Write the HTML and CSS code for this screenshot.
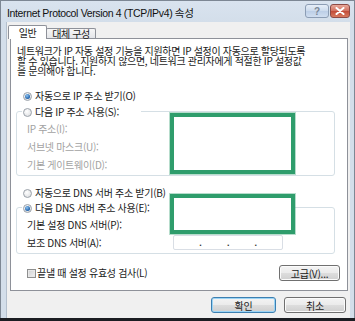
FILE: index.html
```html
<!DOCTYPE html>
<html lang="ko">
<head>
  <meta charset="UTF-8" />
  <meta name="viewport" content="width=device-width, initial-scale=1.0"/>
  <title>Internet Protocol Version 4 (TCP/IPv4) 속성</title>
  <link rel="stylesheet" href="styles.css">
</head>
<body>
  <div class="window">
    <div class="titlebar">
      <span class="title">Internet Protocol Version 4 (TCP/IPv4) 속성</span>
      <div class="caption-buttons">
        <span class="cap-btn help">?</span>
        <span class="cap-btn close">
          <svg width="10" height="8" viewBox="0 0 10 8"><path d="M1.5 1 L8.5 7 M8.5 1 L1.5 7" stroke="#fff" stroke-width="2" stroke-linecap="round"/></svg>
        </span>
      </div>
    </div>

    <div class="client">
      <div class="tabs">
        <div class="tab active">일반</div>
        <div class="tab">대체 구성</div>
      </div>

      <div class="panel">
        <p class="intro">네트워크가 IP 자동 설정 기능을 지원하면 IP 설정이 자동으로 할당되도록<br>할 수 있습니다. 지원하지 않으면, 네트워크 관리자에게 적절한 IP 설정값<br>을 문의해야 합니다.</p>

        <label class="option first"><span class="radio checked"></span>자동으로 IP 주소 받기(O)</label>

        <div class="group group-ip">
          <label class="option legend"><span class="radio"></span>다음 IP 주소 사용(S):</label>
          <div class="field disabled"><span>IP 주소(I):</span><span class="ip-box"><i></i><b>.</b><i></i><b>.</b><i></i><b>.</b><i></i></span></div>
          <div class="field disabled"><span>서브넷 마스크(U):</span><span class="ip-box"><i></i><b>.</b><i></i><b>.</b><i></i><b>.</b><i></i></span></div>
          <div class="field disabled"><span>기본 게이트웨이(D):</span><span class="ip-box"><i></i><b>.</b><i></i><b>.</b><i></i><b>.</b><i></i></span></div>
        </div>

        <label class="option dns-auto"><span class="radio"></span>자동으로 DNS 서버 주소 받기(B)</label>

        <div class="group group-dns">
          <label class="option legend"><span class="radio checked"></span>다음 DNS 서버 주소 사용(E):</label>
          <div class="field"><span>기본 설정 DNS 서버(P):</span><span class="ip-box"><i></i><b>.</b><i></i><b>.</b><i></i><b>.</b><i></i></span></div>
          <div class="field"><span>보조 DNS 서버(A):</span><span class="ip-box"><i></i><b>.</b><i></i><b>.</b><i></i><b>.</b><i></i></span></div>
        </div>

        <div class="panel-footer">
          <label class="option check-row"><span class="check"></span>끝낼 때 설정 유효성 검사(L)</label>
          <button class="btn advanced">고급(V)...</button>
        </div>

        <div class="marker marker-ip"></div>
        <div class="marker marker-dns"></div>
      </div>

      <div class="dialog-buttons">
        <button class="btn ok">확인</button>
        <button class="btn cancel">취소</button>
      </div>
    </div>
  </div>
</body>
</html>
```

FILE: styles.css
```css
:root {
  --frame: #d3deea;
  --client: #f0f0f0;
  --tab-border: #8e9199;
  --group-border: #d5dfe5;
  --disabled: #a2a2a2;
  --marker: #2f9d6c;
  --kr: "Noto Sans CJK KR", "Liberation Sans", sans-serif;
}

* {
  margin: 0;
  padding: 0;
  box-sizing: border-box;
}

body {
  width: 355px;
  height: 321px;
  overflow: hidden;
  background: #1b1d22;
  font-family: var(--kr);
  font-size: 10px;
  letter-spacing: -0.3px;
  color: #1a1a1a;
}

.window {
  height: 318px;
  background: var(--frame);
  border: 1px solid #7d8794;
  border-bottom: none;
  display: flex;
  flex-direction: column;
  padding: 0 4px 0 5px;
}

.titlebar {
  height: 21px;
  display: flex;
  align-items: center;
  justify-content: space-between;
  background: linear-gradient(#d9e3ef, #d3deea);
  margin: 0 -4px 0 -5px;
  padding: 0 4px 0 6px;
}

.title {
  font-family: "Liberation Sans", var(--kr);
  font-size: 10.5px;
  letter-spacing: -0.35px;
  color: #111;
  padding-top: 2px;
}

.caption-buttons {
  display: flex;
  gap: 1px;
  align-self: flex-start;
  margin-top: 3px;
}

.cap-btn {
  height: 14px;
  border-radius: 3px;
  display: flex;
  align-items: center;
  justify-content: center;
}

.help {
  width: 24px;
  border: 1px solid #8c9db4;
  background: linear-gradient(#e6eef8, #cbdaec 50%, #bccee6 51%, #d0def0);
  font-family: "Liberation Sans", sans-serif;
  font-size: 10px;
  font-weight: bold;
  color: #7b8796;
}

.close {
  width: 20px;
  border: 1px solid #8d4a45;
  background: linear-gradient(#e8a99b, #d1705f 50%, #c24a37 51%, #d77a5f);
}

.client {
  flex: 1;
  background: var(--client);
  border-left: 1px solid #b4c0ce;
  padding: 3px 2px 0 3px;
  display: flex;
  flex-direction: column;
}

.tabs {
  display: flex;
  align-items: flex-end;
  margin-left: -2px;
  height: 13px;
  position: relative;
  z-index: 2;
}

.tab {
  height: 10px;
  width: 50px;
  margin-left: -1px;
  border: 1px solid var(--tab-border);
  border-bottom: none;
  border-radius: 2px 2px 0 0;
  background: linear-gradient(#f6f6f6, #e4e6ea);
  display: flex;
  align-items: center;
  justify-content: center;
  line-height: 10px;
  padding-top: 1px;
  letter-spacing: -0.4px;
}

.tab.active {
  width: 39px;
  height: 14px;
  margin-left: 0;
  margin-bottom: -1px;
  background: #fff;
  position: relative;
  z-index: 1;
}

.panel {
  position: relative;
  width: 338px;
  height: 253px;
  background: #fff;
  border: 1px solid var(--tab-border);
  padding: 7px 7px 0 0;
}

.intro {
  padding-left: 6px;
  line-height: 10px;
  font-size: 10px;
  letter-spacing: -0.32px;
  white-space: nowrap;
}

.option {
  display: flex;
  align-items: center;
  height: 14px;
  line-height: 14px;
  white-space: nowrap;
}

.option.first {
  margin: 13px 0 0 12px;
}

.radio {
  width: 9px;
  height: 9px;
  border-radius: 50%;
  border: 1px solid #9aa1a9;
  background: radial-gradient(circle at 40% 35%, #ffffff, #d7d9dc);
  margin-right: 3px;
  position: relative;
  flex-shrink: 0;
}

.radio.checked::after {
  content: '';
  position: absolute;
  left: 1px;
  top: 1px;
  width: 5px;
  height: 5px;
  border-radius: 50%;
  background: radial-gradient(circle at 40% 35%, #8ec3f0, #1d5fa9 70%);
}

.group {
  margin: 0 5px 0 5px;
  border: 1px solid var(--group-border);
  border-radius: 3px;
  padding: 0 51px 2px 10px;
}

.group-ip {
  margin-top: 8px;
}

.group .legend {
  width: fit-content;
  margin: -7px 0 0 -5px;
  padding: 0 22px 0 1px;
  background: #fff;
}

.field {
  height: 18px;
  display: flex;
  align-items: center;
  justify-content: space-between;
}

.field.disabled span:first-child {
  color: var(--disabled);
}

.ip-box {
  width: 110px;
  height: 15px;
  border: 1px solid #d9dee5;
  border-radius: 2px;
  display: grid;
  grid-template-columns: 1fr auto 1fr auto 1fr auto 1fr;
  align-items: end;
  font-family: "Liberation Sans", sans-serif;
  font-size: 9px;
  line-height: 11px;
  color: #333;
}

.ip-box b {
  font-weight: bold;
}

.field.disabled .ip-box {
  background: #f4f4f4;
}

.option.dns-auto {
  margin: 10px 0 0 12px;
}

.group-dns {
  margin-top: 7px;
}

.panel-footer {
  margin: 11px 0 0 16px;
  display: flex;
  align-items: center;
  justify-content: space-between;
}

.check {
  width: 9px;
  height: 9px;
  border: 1px solid #8e8f8f;
  background: linear-gradient(135deg, #cfd0d2, #f1f1f1);
  box-shadow: inset 0 0 0 1px #e8e8e8;
  margin-right: 1px;
}

.btn {
  font-family: var(--kr);
  font-size: 10px;
  letter-spacing: -0.2px;
  color: #1a1a1a;
  border: 1px solid #707070;
  border-radius: 3px;
  background: linear-gradient(#f4f4f4, #ebebeb 48%, #dddddd 52%, #cfcfcf);
  box-shadow: inset 0 0 0 1px #fbfbfb;
  height: 16px;
  line-height: 13px;
  cursor: pointer;
}

.advanced {
  width: 61px;
}

.marker {
  position: absolute;
  left: 159px;
  width: 125px;
  border: 4px solid var(--marker);
  background: #fff;
  box-shadow: 0 0 0 1px rgba(47, 157, 108, 0.35);
}

.marker-ip {
  top: 74px;
  height: 61px;
}

.marker-dns {
  top: 155px;
  height: 40px;
}

.dialog-buttons {
  display: flex;
  justify-content: flex-end;
  gap: 8px;
  margin-top: 6px;
  padding-right: 2px;
}

.ok {
  width: 65px;
  border-color: #3c7fb1;
  box-shadow: inset 0 0 0 1px #9bd4f5;
}

.cancel {
  width: 62px;
}
```
